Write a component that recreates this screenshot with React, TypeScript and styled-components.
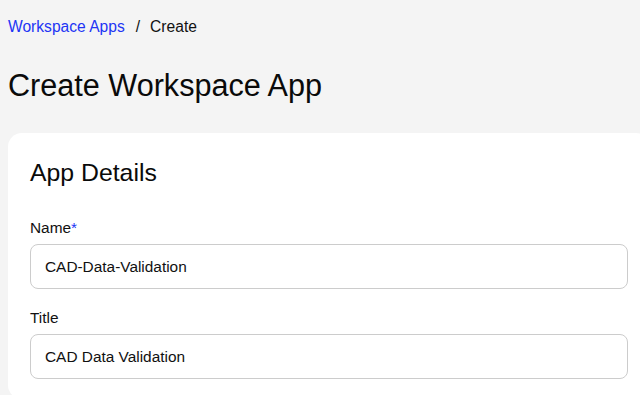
import React from 'react';
import styled, { createGlobalStyle } from 'styled-components';

const GlobalStyle = createGlobalStyle`
  html, body {
    margin: 0;
    padding: 0;
    background: #f4f4f4;
    overflow: hidden;
  }
  body {
    font-family: 'Liberation Sans', Arial, sans-serif;
    color: #111111;
  }
`;

const App = () => {
  return (
    <>
      <GlobalStyle />
      <Page>
        <Breadcrumb>
          <CrumbLink href="#">Workspace Apps</CrumbLink>
          <Separator>/</Separator>
          <CrumbCurrent>Create</CrumbCurrent>
        </Breadcrumb>
        <Title>Create Workspace App</Title>
        <Card>
          <CardTitle>App Details</CardTitle>
          <Field>
            <FieldLabel>
              Name<Required>*</Required>
            </FieldLabel>
            <Input defaultValue="CAD-Data-Validation" />
          </Field>
          <Field>
            <FieldLabel>Title</FieldLabel>
            <Input defaultValue="CAD Data Validation" />
          </Field>
        </Card>
      </Page>
    </>
  );
};

const Page = styled.div`
  padding: 17px 0 0 8px;
  width: 650px;
  box-sizing: border-box;
`;

const Breadcrumb = styled.nav`
  display: flex;
  align-items: center;
  font-size: 15.6px;
  line-height: 20px;
`;

const CrumbLink = styled.a`
  color: #2235f5;
  text-decoration: none;
`;

const Separator = styled.span`
  margin: 0 10px 0 11px;
  color: #111111;
`;

const CrumbCurrent = styled.span`
  color: #111111;
`;

const Title = styled.h1`
  margin: 30px 0 0 0;
  font-size: 30.6px;
  line-height: 36px;
  font-weight: 400;
  color: #0a0a0a;
`;

const Card = styled.section`
  margin-top: 30px;
  background: #ffffff;
  border-radius: 14px;
  padding: 25px 22px 20px 22px;
  display: flex;
  flex-direction: column;
  gap: 19px;
`;

const CardTitle = styled.h2`
  margin: 0 0 11px 0;
  font-size: 24.8px;
  line-height: 30px;
  font-weight: 400;
  color: #0a0a0a;
`;

const Field = styled.div`
  display: flex;
  flex-direction: column;
  gap: 6px;
`;

const FieldLabel = styled.label`
  font-size: 15.4px;
  line-height: 20px;
  color: #111111;
`;

const Required = styled.span`
  color: #2235f5;
`;

const Input = styled.input`
  height: 45px;
  box-sizing: border-box;
  border: 1px solid #cccccc;
  border-radius: 8px;
  padding: 0 14px;
  font-family: 'Liberation Sans', Arial, sans-serif;
  font-size: 15.4px;
  color: #111111;
  background: #ffffff;
  outline: none;
`;

export default App;
